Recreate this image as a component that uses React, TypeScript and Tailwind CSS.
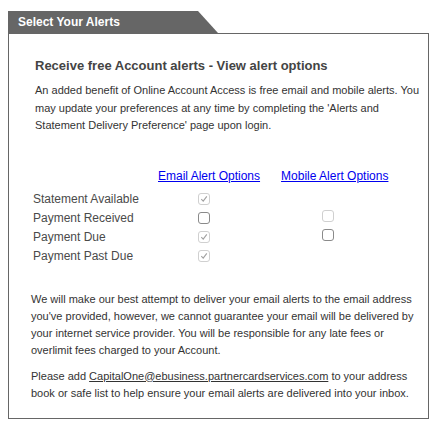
import React from 'react';

type Box = 'on' | 'off' | 'disabled-on' | 'disabled-off' | null;

interface AlertRow {
  label: string;
  email: Box;
  mobile: Box;
}

const rows: AlertRow[] = [
  { label: 'Statement Available', email: 'disabled-on', mobile: null },
  { label: 'Payment Received', email: 'off', mobile: 'disabled-off' },
  { label: 'Payment Due', email: 'disabled-on', mobile: 'off' },
  { label: 'Payment Past Due', email: 'disabled-on', mobile: null },
];

const CheckBox: React.FC<{ state: Box }> = ({ state }) => {
  if (!state) return <span className="inline-block w-[12px] h-[12px]" />;
  const disabled = state.startsWith('disabled');
  const checked = state.endsWith('on');
  return (
    <span
      className={`inline-flex items-center justify-center w-[12px] h-[12px] rounded-[3px] border bg-white ${
        disabled ? 'border-[#d0d0d0]' : 'border-[#8a8a8a]'
      }`}
    >
      {checked && (
        <svg width="8" height="8" viewBox="0 0 8 8">
          <path d="M1.3 4.2 L3.2 6.1 L6.8 1.4" fill="none" stroke="#a0a0a0" strokeWidth="1.1" />
        </svg>
      )}
    </span>
  );
};

export default function App() {
  return (
    <div className="w-[435px] h-[423px] bg-white pt-[11px] pl-[8px] font-['Liberation_Sans',Arial,sans-serif]">
      {/* Tab */}
      <div className="w-[210px] h-[22px] bg-[#666666] [clip-path:polygon(0_0,190px_0,100%_100%,0_100%)] flex items-center pl-[10px]">
        <span className="text-white font-bold text-[12px]">Select Your Alerts</span>
      </div>

      {/* Panel */}
      <div className="w-[421px] h-[386px] border border-[#666666] pl-[24px] pr-[2px] pt-[24px]">
        <h2 className="text-[13px] font-bold text-[#444444] leading-[16px] ml-[2px]">
          Receive free Account alerts - View alert options
        </h2>
        <p className="text-[11px] text-[#333333] leading-[17.5px] mt-[8px] ml-[2px]">
          An added benefit of Online Account Access is free email and mobile alerts. You may update your preferences at any time by completing the 'Alerts and Statement Delivery Preference' page upon login.
        </p>

        <div className="flex text-[12px] leading-[16px] mt-[33px] ml-[125px]">
          <a href="#" className="text-[#0000ee] underline">Email Alert Options</a>
          <a href="#" className="text-[#0000ee] underline ml-[21px]">Mobile Alert Options</a>
        </div>

        <div className="mt-[6px]">
          {rows.map((r) => (
            <div key={r.label} className="flex items-center h-[19px] text-[12px] text-[#4a4a4a]">
              <span className="w-[165px]">{r.label}</span>
              <CheckBox state={r.email} />
              <span className="ml-[112px]">
                <CheckBox state={r.mobile} />
              </span>
            </div>
          ))}
        </div>

        <p className="w-[384px] text-[11px] text-[#333333] leading-[17px] mt-[25px] -ml-[2px]">
          We will make our best attempt to deliver your email alerts to the email address you've provided, however, we cannot guarantee your email will be delivered by your internet service provider. You will be responsible for any late fees or overlimit fees charged to your Account.
        </p>
        <p className="w-[384px] text-[11px] text-[#333333] leading-[17px] mt-[9px] -ml-[2px]">
          Please add <a href="#" className="underline text-[#333333]">CapitalOne@ebusiness.partnercardservices.com</a> to your address book or safe list to help ensure your email alerts are delivered into your inbox.
        </p>
      </div>
    </div>
  );
}
